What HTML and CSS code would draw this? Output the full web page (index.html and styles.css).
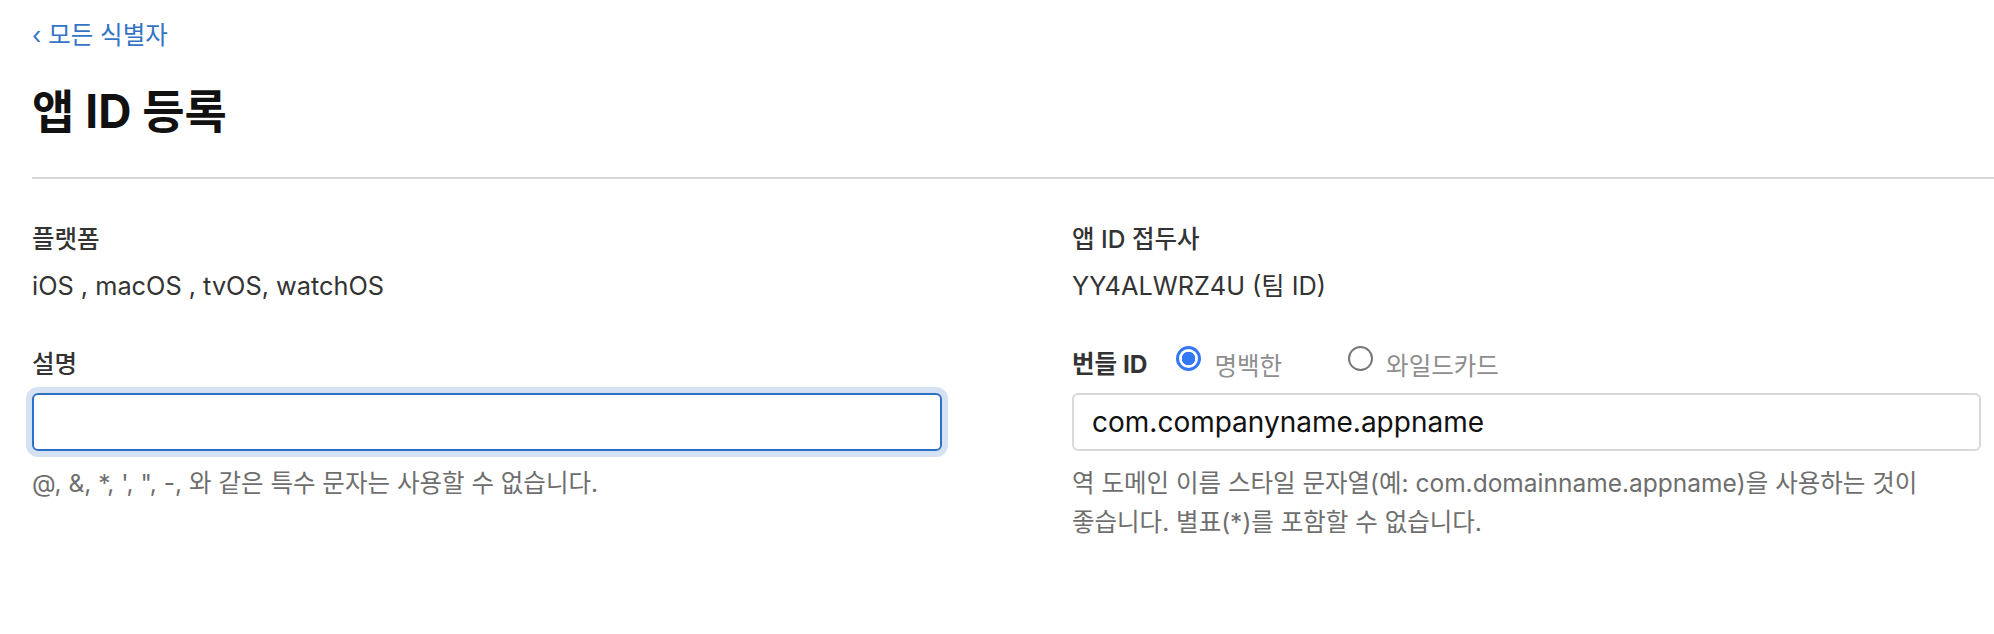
FILE: index.html
```html
<!DOCTYPE html>
<html lang="ko">
<head>
<meta charset="utf-8">
<title>앱 ID 등록</title>
<link rel="stylesheet" href="styles.css">
</head>
<body>
<div class="page">
  <a class="back" href="#"><span class="chev">‹</span> 모든 식별자</a>
  <h1 class="title">앱 ID 등록</h1>
  <hr class="divider">
  <div class="grid">
    <div class="field">
      <div class="label">플랫폼</div>
      <div class="value">iOS , macOS , tvOS, watchOS</div>
    </div>
    <div class="field">
      <div class="label">앱 ID 접두사</div>
      <div class="value">YY4ALWRZ4U (팀 ID)</div>
    </div>
    <div class="field">
      <div class="label">설명</div>
      <div class="input focused"></div>
      <div class="hint">@, &amp;, *, ', ", -, 와 같은 특수 문자는 사용할 수 없습니다.</div>
    </div>
    <div class="field">
      <div class="label-row">
        <span class="label strong">번들 ID</span>
        <span class="radio checked"></span><span class="radio-text">명백한</span>
        <span class="radio second"></span><span class="radio-text">와일드카드</span>
      </div>
      <div class="input plain"><span class="input-text">com.companyname.appname</span></div>
      <div class="hint">역 도메인 이름 스타일 문자열(예: com.domainname.appname)을 사용하는 것이<br>좋습니다. 별표(*)를 포함할 수 없습니다.</div>
    </div>
  </div>
</div>
</body>
</html>
```
FILE: styles.css
```css
html, body {
  margin: 0;
  padding: 0;
  background: #ffffff;
}
body {
  font-family: "Inter", "Noto Sans CJK KR", sans-serif;
  color: #333333;
}
.page {
  padding: 20px 0 0 32px;
}
.back {
  display: block;
  font-size: 24.5px;
  line-height: 30px;
  color: #3574c4;
  text-decoration: none;
}
.chev {
  display: inline-block;
  font-size: 24px;
  margin-right: 0;
}
.title {
  margin: 33px 0 0 0;
  font-size: 46px;
  line-height: 54px;
  font-weight: 700;
  color: #111111;
}
.divider {
  margin: 39px 0 0 0;
  border: 0;
  height: 2px;
  background: #d8d8d8;
}
.grid {
  display: grid;
  grid-template-columns: 910px 909px;
  column-gap: 130px;
  row-gap: 46px;
  padding-top: 45px;
}
.field {
  display: flex;
  flex-direction: column;
}
.label {
  font-size: 24.5px;
  line-height: 30px;
  font-weight: 500;
  color: #333333;
}
.label.strong {
  font-weight: 700;
  font-size: 24.5px;
}
.value {
  margin-top: 15px;
  font-size: 25.3px;
  line-height: 34px;
  color: #333333;
}
.label-row {
  display: flex;
  align-items: center;
  height: 30px;
}
.radio {
  width: 25px;
  height: 25px;
  box-sizing: border-box;
  border-radius: 50%;
  border: 2px solid #777777;
  margin-left: 29px;
  margin-right: 13px;
  margin-top: -12px;
  flex: none;
}
.radio.checked {
  border: 3px solid #3478f6;
  background: radial-gradient(circle, #3478f6 0 6.5px, #ffffff 7px);
}
.radio.second {
  margin-left: 66px;
}
.radio-text {
  font-size: 24.5px;
  color: #8e8e8e;
}
.input {
  margin-top: 14px;
  height: 58px;
  box-sizing: border-box;
  border-radius: 6px;
  display: flex;
  align-items: center;
}
.input.focused {
  border: 2px solid #2f6fc7;
  box-shadow: 0 0 0 6px #d4e2f4;
}
.input.plain {
  border: 2px solid #d9d9d9;
  padding-left: 18px;
}
.input-text {
  font-size: 28px;
  color: #111111;
}
.hint {
  margin-top: 13px;
  font-size: 24.5px;
  line-height: 39px;
  color: #6e6e6e;
}
```
